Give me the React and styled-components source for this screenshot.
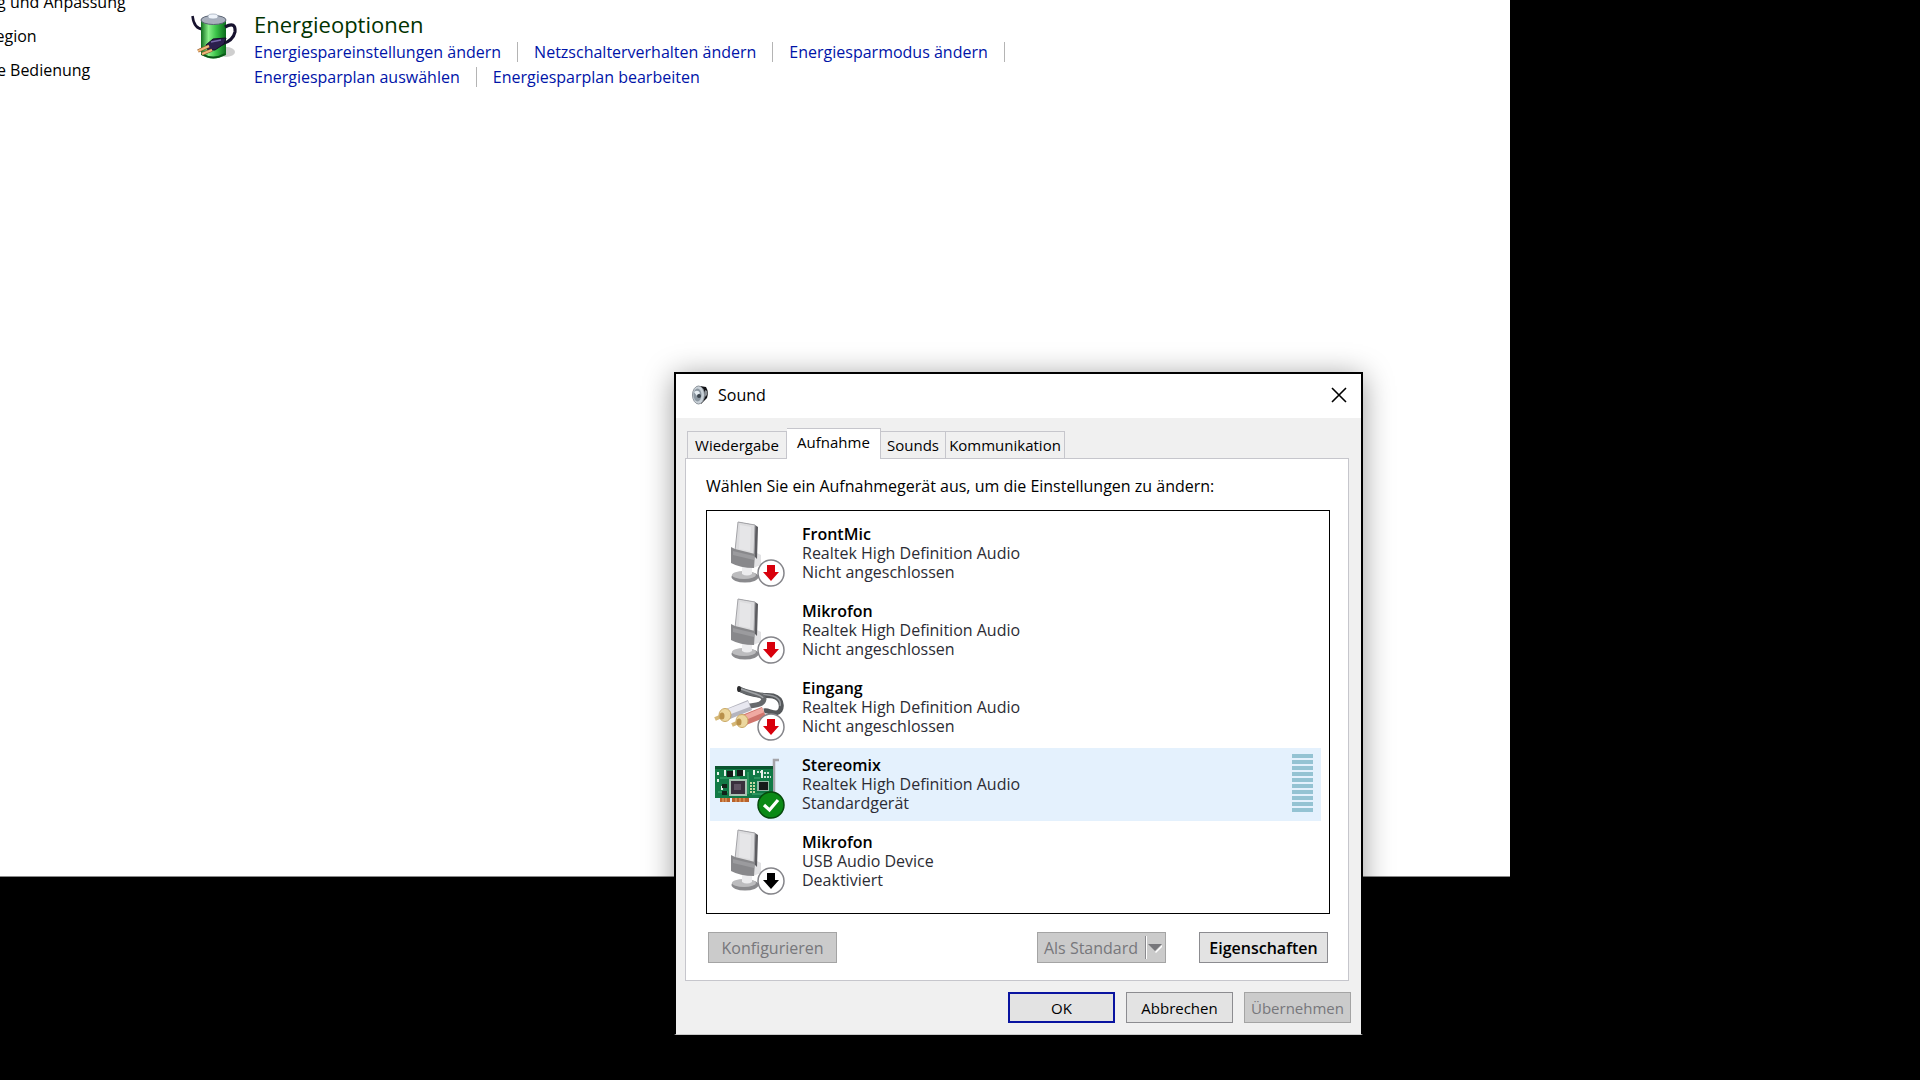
import React, { useState } from "react";
import styled, { createGlobalStyle, css } from "styled-components";

const GlobalStyle = createGlobalStyle`
  *, *::before, *::after { box-sizing: border-box; }
  body {
    margin: 0;
    background: #000;
    overflow: hidden;
    font-family: "Open Sans", "Noto Sans", sans-serif;
    font-size: 15px;
    line-height: 20px;
    color: #000;
  }
  button { font: inherit; color: inherit; margin: 0; cursor: default; }
`;

const Desktop = styled.div`
  position: relative;
  min-height: 100vh;
  background: #000;
  overflow: hidden;
`;

/* Control panel window, dragged past the top left corner of the desktop */
const Explorer = styled.section`
  position: absolute;
  left: -80px;
  top: -14px;
  width: 1590px;
  height: 891px;
  display: grid;
  grid-template-columns: 260px 1fr;
  align-items: start;
  background: #fff;
  border-bottom: 1px solid #8a8a8a;
  overflow: hidden;
`;

const Sidebar = styled.nav`
  display: flex;
  flex-direction: column;
  gap: 14px;
  padding-top: 6px;
`;

const SidebarLink = styled.a`
  color: #000;
  font-size: 16px;
  text-decoration: none;
  white-space: nowrap;
`;

const Category = styled.article`
  display: flex;
  gap: 4px;
  padding-top: 19px;
`;

const CategoryBody = styled.div`
  padding-top: 4px;
`;

const CategoryTitle = styled.h2`
  margin: 0;
  font-size: 22px;
  line-height: 30px;
  font-weight: 400;
  color: #003300;
`;

const Tasks = styled.ul`
  display: flex;
  flex-wrap: wrap;
  max-width: 800px;
  margin: 0;
  padding: 0;
  list-style: none;
`;

const Task = styled.li`
  display: flex;
  align-items: center;
  height: 25px;
  white-space: nowrap;
  &:not(:last-child)::after {
    content: "";
    width: 1px;
    height: 20px;
    margin: 0 16px;
    background: #b4b4b4;
  }
`;

const TaskLink = styled.a`
  font-size: 16px;
  color: #0014a8;
  text-decoration: none;
`;

const Dialog = styled.section`
  position: absolute;
  left: 674px;
  top: 372px;
  width: 689px;
  background: #f0f0f0;
  border: 2px solid #000;
  border-bottom: 1px solid #c8c8c8;
  box-shadow: 0 4px 28px rgba(0, 0, 0, 0.4);
`;

const TitleBar = styled.header`
  display: flex;
  align-items: center;
  height: 44px;
  padding: 0 7px 2px 15px;
  background: #fff;
`;

const DialogTitle = styled.h1`
  flex: 1;
  margin: 0 0 0 9px;
  font-size: 16px;
  font-weight: 500;
`;

const CloseButton = styled.button`
  display: grid;
  place-items: center;
  width: 30px;
  height: 30px;
  padding: 0;
  border: 0;
  background: transparent;
`;

const DialogBody = styled.div`
  padding: 10px 10px 11px 9px;
`;

const TabList = styled.div`
  display: flex;
  align-items: flex-end;
  padding-left: 2px;
`;

const Tab = styled.button`
  width: ${(p) => p.$width}px;
  height: 27px;
  padding: 0;
  border: 1px solid #c6c6cc;
  border-bottom: 0;
  background: #f0f0f0;
  font-weight: 500;
  line-height: 24px;
  white-space: nowrap;
  & + & { border-left: 0; }
  ${(p) =>
    p.$active &&
    css`
      height: 31px;
      margin-bottom: -1px;
      padding-bottom: 4px;
      background: #fff;
      position: relative;
      z-index: 1;
    `}
`;

const TabPanel = styled.div`
  margin-right: 2px;
  padding: 17px 18px 17px 20px;
  border: 1px solid #c6c6cc;
  background: #fff;
`;

const Prompt = styled.p`
  margin: 0 0 14px;
  font-size: 16px;
  font-weight: 500;
`;

const DeviceList = styled.ul`
  display: flex;
  flex-direction: column;
  gap: 4px;
  margin: 0;
  padding: 6px 8px 15px 3px;
  border: 1px solid #000;
  background: #fff;
  list-style: none;
`;

const DeviceRow = styled.li`
  display: grid;
  grid-template-columns: 76px 1fr auto;
  column-gap: 16px;
  height: 73px;
  padding-right: 8px;
  background: ${(p) => (p.$selected ? "#e4f1fd" : "transparent")};
`;

const DeviceText = styled.div`
  display: flex;
  flex-direction: column;
  padding-top: 8px;
  font-size: 16px;
  line-height: 19px;
  color: #2c2c34;
`;

const DeviceName = styled.strong`
  font-weight: 600;
  color: #000;
`;

const Meter = styled.div`
  display: flex;
  flex-direction: column;
  gap: 2px;
  padding-top: 6px;
`;

const MeterBar = styled.span`
  width: 21px;
  height: 4px;
  background: #94c3d3;
`;

const ButtonRow = styled.div`
  display: flex;
  justify-content: ${(p) => (p.$end ? "flex-end" : "flex-start")};
  gap: ${(p) => (p.$end ? "11px" : "33px")};
  padding: ${(p) => (p.$end ? "11px 0 0" : "18px 2px 0")};
`;

const PushButton = styled.button`
  width: ${(p) => (p.$wide ? "129px" : "107px")};
  height: 31px;
  padding: 0;
  border: 1px solid #8c8c90;
  background: #e3e3e3;
  font-size: ${(p) => (p.$wide ? "16px" : "15px")};
  font-weight: ${(p) => (p.$wide ? 600 : 500)};
  white-space: nowrap;
  ${(p) => p.$primary && css`border: 2px solid #0a14a0;`}
  &:disabled {
    border-color: #a4a4a4;
    background: #cbcbcb;
    color: #77777b;
    font-weight: 400;
  }
`;

const SplitButton = styled.div`
  display: flex;
  width: 129px;
  height: 31px;
  margin-left: auto;
  border: 1px solid #a4a4a4;
  background: #cbcbcb;
`;

const SplitMain = styled.button`
  flex: 1;
  padding: 0;
  border: 0;
  background: transparent;
  font-size: 16px;
  white-space: nowrap;
  &:disabled { color: #77777b; }
`;

const SplitArrow = styled.button`
  display: grid;
  place-items: center;
  width: 21px;
  padding: 0;
  border: 0;
  background: transparent;
`;

const BatteryIcon = () => (
  <svg width="70" height="60" viewBox="0 0 70 60" aria-hidden="true">
    <defs>
      <linearGradient id="cell" x1="0" x2="1">
        <stop offset="0" stopColor="#0e6b1c" />
        <stop offset=".3" stopColor="#8af08a" />
        <stop offset=".6" stopColor="#3cc44a" />
        <stop offset="1" stopColor="#0b6a1c" />
      </linearGradient>
    </defs>
    <ellipse cx="46" cy="47" rx="9" ry="5" fill="#cfcfcf" />
    <path d="M12.500 11Q14 24 23 24" fill="none" stroke="#17122e" strokeWidth="2.500" />
    <path d="M21 15V50Q33 57 46 50V15Z" fill="url(#cell)" />
    <path d="M22 49Q33 56 45 49" fill="none" stroke="#0a5618" strokeWidth="2" />
    <ellipse cx="33.500" cy="15" rx="12.500" ry="4.500" fill="#a9b0bd" stroke="#5b6474" />
    <ellipse cx="33" cy="11.500" rx="5" ry="2.500" fill="#eef3fa" stroke="#9aa5b5" strokeWidth=".7" />
    <path d="M45 22Q56 16 55 27Q53 36 42 39" fill="none" stroke="#17122e" strokeWidth="3.200" />
    <path d="M26 40L33 34L46 33L44 39L35 45L28 45Z" fill="#2b1f4d" stroke="#120c26" />
    <path d="M31 37L41 35" stroke="#7567a8" strokeWidth="1.500" />
    <path d="M29 41L18 46M32 45L22 49" stroke="#8a5528" strokeWidth="3.500" />
    <path d="M29 41L18 46M32 45L22 49" stroke="#f0b87c" strokeWidth="2" />
  </svg>
);

const SpeakerIcon = () => (
  <svg width="18" height="20" viewBox="0 0 18 20" aria-hidden="true">
    <path d="M9 1L15 2Q18 7 16 13L10 19Z" fill="#101014" />
    <path d="M14 5L16 6V10L14 12Z" fill="#8b9096" />
    <ellipse cx="7.500" cy="10" rx="6" ry="9" fill="#c9d1d8" stroke="#8b9299" />
    <ellipse cx="6.500" cy="10" rx="4" ry="6.500" fill="#8c97a1" />
    <path d="M3 7Q7 4 9 8L6 11Z" fill="#e6edf2" />
    <circle cx="8" cy="11" r="2" fill="#39424a" />
  </svg>
);

const CloseIcon = () => (
  <svg width="16" height="16" viewBox="0 0 16 16" aria-hidden="true">
    <path d="M1 1L15 15M15 1L1 15" stroke="#000" strokeWidth="1.600" />
  </svg>
);

const Badge = ({ kind }) =>
  kind === "default" ? (
    <g>
      <circle cx="61" cy="57" r="13" fill="#0b8a16" stroke="#064a0c" strokeWidth="1.500" />
      <path d="M54 57L59.500 62L68 52" fill="none" stroke="#fff" strokeWidth="3.200" />
    </g>
  ) : (
    <g>
      <circle cx="61" cy="56" r="13" fill="#fff" stroke="#85858a" strokeWidth="1.500" />
      <path
        d="M57 48H65V55H69L61 64L53 55H57Z"
        fill={kind === "unplugged" ? "#d8000c" : "#000"}
      />
    </g>
  );

const Microphone = () => (
  <g>
    <ellipse cx="35" cy="60" rx="13.500" ry="5.500" fill="#8a8a8d" />
    <ellipse cx="34" cy="58" rx="12" ry="4" fill="#bcbcbe" />
    <path d="M32 48H42V57Q37 60 32 57Z" fill="#ececee" />
    <path d="M45 35L51 38V48L43 51Z" fill="#e2e2e4" />
    <path d="M28 5L45 8L48 10L47 42L44 39Z" fill="#5c5c60" />
    <path d="M28 5L45 8L44 38L25 34Z" fill="#dcdcde" stroke="#a4a4a8" />
    <path d="M30 8L41 10L40 34L29 32Z" fill="#e6e6e8" />
    <path d="M21 30L25 32L45 37L44 51Q30 51 21 46Z" fill="#88888b" />
    <path d="M23 34L44 39V43L23 38Z" fill="#9b9b9e" />
  </g>
);

const LineIn = () => (
  <g fill="none">
    <path d="M29 18C42 25 53 24 63 25C74 28 73 41 66 42C61 42 58 39 54 40" stroke="#55585b" strokeWidth="5" />
    <path d="M30 17C42 23 54 23 63 25C69 27 71 31 70 35" stroke="#96999d" strokeWidth="1.500" />
    <path d="M29 18C40 23 53 23 54 28C53 34 46 34 39 35" stroke="#66696c" strokeWidth="5" />
    <path d="M31 18C41 22 51 23 53 27" stroke="#a0a3a6" strokeWidth="1.500" />
    <ellipse cx="29" cy="18" rx="2" ry="3" fill="#2c2c2e" />
    <path d="M40 34L18 43" stroke="#b4b4be" strokeWidth="11" />
    <path d="M39 33L18 41" stroke="#e8e8f0" strokeWidth="6" />
    <path d="M54 41L34 49" stroke="#d0756d" strokeWidth="11" />
    <path d="M53 39L34 47" stroke="#f0aaa2" strokeWidth="5" />
    <path d="M12 45L5 48" stroke="#d6b878" strokeWidth="4" />
    <ellipse cx="15" cy="44" rx="6" ry="6.500" fill="#ecd79e" stroke="#c9a762" />
    <ellipse cx="12" cy="45" rx="2.500" ry="3.500" fill="#b8904a" />
    <path d="M29 51L22 54" stroke="#d6b878" strokeWidth="4" />
    <ellipse cx="32" cy="50" rx="6" ry="6.500" fill="#ecd79e" stroke="#c9a762" />
    <ellipse cx="29" cy="51" rx="2.500" ry="3.500" fill="#b8904a" />
  </g>
);

const SoundCard = () => (
  <g>
    <path d="M69 12H64V50" fill="none" stroke="#a4a4a8" strokeWidth="2.500" />
    <rect x="10" y="50" width="10" height="4" fill="#b8622c" />
    <rect x="22" y="50" width="17" height="4" fill="#b8622c" />
    <path d="M13 50V54M16 50V54M26 50V54M30 50V54M34 50V54" stroke="#e9b070" />
    <rect x="5" y="18" width="58" height="32" fill="#117a46" />
    <path d="M5 18H63V21H5Z" fill="#0a5530" />
    <path d="M8 44H18M38 24V46M42 46H60M10 30H30M44 30H50" stroke="#43ad75" />
    <rect x="19" y="31" width="18" height="17" fill="#a9c4b4" />
    <rect x="21" y="33" width="14" height="13" fill="#39303d" />
    <rect x="24" y="36" width="7" height="6" fill="#5e5362" />
    <rect x="47" y="33" width="12" height="10" fill="#93b8a4" />
    <rect x="49" y="34" width="9" height="8" fill="#161a1a" />
    <rect x="17" y="23" width="6" height="6" fill="#151b18" />
    <rect x="27" y="22" width="6" height="6" fill="#151b18" />
    <path d="M8 24V27M8 31V34M12 38V42M15 22V28M24 22V28M34 22V28M44 22V27M52 22V30" stroke="#e8f2ec" strokeWidth="2" />
    <path d="M41 34V46M44 34V46" stroke="#c6d9a2" strokeWidth="2" strokeDasharray="2 1" />
    <path d="M47 24H51M54 25H60M54 29H61" stroke="#cfe3d6" strokeWidth="2" strokeDasharray="2 1" />
    <rect x="12" y="36" width="5" height="4" fill="#12241a" />
    <rect x="12" y="43" width="5" height="4" fill="#12241a" />
  </g>
);

const drawings = { mic: Microphone, line: LineIn, card: SoundCard };

const DeviceIcon = ({ type, status }) => {
  const Drawing = drawings[type];
  return (
    <svg width="76" height="73" viewBox="0 0 76 73" aria-hidden="true">
      <Drawing />
      <Badge kind={status} />
    </svg>
  );
};

const sections = ["Darstellung und Anpassung", "Zeit und Region", "Erleichterte Bedienung"];

const tasks = [
  "Energiespareinstellungen ändern",
  "Netzschalterverhalten ändern",
  "Energiesparmodus ändern",
  "Energiesparplan auswählen",
  "Energiesparplan bearbeiten",
];

const tabs = [
  { label: "Wiedergabe", width: 100 },
  { label: "Aufnahme", width: 94 },
  { label: "Sounds", width: 65 },
  { label: "Kommunikation", width: 119 },
];

const devices = [
  { name: "FrontMic", driver: "Realtek High Definition Audio", state: "Nicht angeschlossen", type: "mic", status: "unplugged" },
  { name: "Mikrofon", driver: "Realtek High Definition Audio", state: "Nicht angeschlossen", type: "mic", status: "unplugged" },
  { name: "Eingang", driver: "Realtek High Definition Audio", state: "Nicht angeschlossen", type: "line", status: "unplugged" },
  { name: "Stereomix", driver: "Realtek High Definition Audio", state: "Standardgerät", type: "card", status: "default" },
  { name: "Mikrofon", driver: "USB Audio Device", state: "Deaktiviert", type: "mic", status: "disabled" },
];

export default function App() {
  const [tab, setTab] = useState("Aufnahme");
  const [selected, setSelected] = useState(3);

  return (
    <>
      <GlobalStyle />
      <Desktop>
        <Explorer>
          <Sidebar>
            {sections.map((s) => (
              <SidebarLink key={s} href="#">{s}</SidebarLink>
            ))}
          </Sidebar>
          <Category>
            <BatteryIcon />
            <CategoryBody>
              <CategoryTitle>Energieoptionen</CategoryTitle>
              <Tasks>
                {tasks.map((t) => (
                  <Task key={t}>
                    <TaskLink href="#">{t}</TaskLink>
                  </Task>
                ))}
              </Tasks>
            </CategoryBody>
          </Category>
        </Explorer>

        <Dialog role="dialog" aria-labelledby="sound-title">
          <TitleBar>
            <SpeakerIcon />
            <DialogTitle id="sound-title">Sound</DialogTitle>
            <CloseButton type="button" aria-label="Schließen">
              <CloseIcon />
            </CloseButton>
          </TitleBar>
          <DialogBody>
            <TabList role="tablist">
              {tabs.map((t) => (
                <Tab
                  key={t.label}
                  type="button"
                  role="tab"
                  aria-selected={t.label === tab}
                  $active={t.label === tab}
                  $width={t.width}
                  onClick={() => setTab(t.label)}
                >
                  {t.label}
                </Tab>
              ))}
            </TabList>
            <TabPanel role="tabpanel">
              <Prompt id="device-prompt">
                Wählen Sie ein Aufnahmegerät aus, um die Einstellungen zu ändern:
              </Prompt>
              <DeviceList role="listbox" aria-labelledby="device-prompt">
                {devices.map((d, i) => (
                  <DeviceRow
                    key={i}
                    role="option"
                    aria-selected={i === selected}
                    $selected={i === selected}
                    onClick={() => setSelected(i)}
                  >
                    <DeviceIcon type={d.type} status={d.status} />
                    <DeviceText>
                      <DeviceName>{d.name}</DeviceName>
                      <span>{d.driver}</span>
                      <span>{d.state}</span>
                    </DeviceText>
                    {d.status === "default" && (
                      <Meter aria-hidden="true">
                        {Array.from({ length: 10 }, (_, n) => (
                          <MeterBar key={n} />
                        ))}
                      </Meter>
                    )}
                  </DeviceRow>
                ))}
              </DeviceList>
              <ButtonRow>
                <PushButton type="button" $wide disabled>Konfigurieren</PushButton>
                <SplitButton>
                  <SplitMain type="button" disabled>Als Standard</SplitMain>
                  <SplitArrow type="button" disabled aria-label="Weitere Optionen">
                    <svg width="21" height="23" viewBox="0 0 21 23" aria-hidden="true">
                      <path d="M1.500 0V23" stroke="#8a8a8e" />
                      <path d="M2.500 0V23" stroke="#fff" />
                      <path d="M11 16L18 9V11L12 17Z" fill="#fff" />
                      <path d="M4 8H18L11 15Z" fill="#77777b" />
                    </svg>
                  </SplitArrow>
                </SplitButton>
                <PushButton type="button" $wide>Eigenschaften</PushButton>
              </ButtonRow>
            </TabPanel>
            <ButtonRow $end>
              <PushButton type="button" $primary>OK</PushButton>
              <PushButton type="button">Abbrechen</PushButton>
              <PushButton type="button" disabled>Übernehmen</PushButton>
            </ButtonRow>
          </DialogBody>
        </Dialog>
      </Desktop>
    </>
  );
}
